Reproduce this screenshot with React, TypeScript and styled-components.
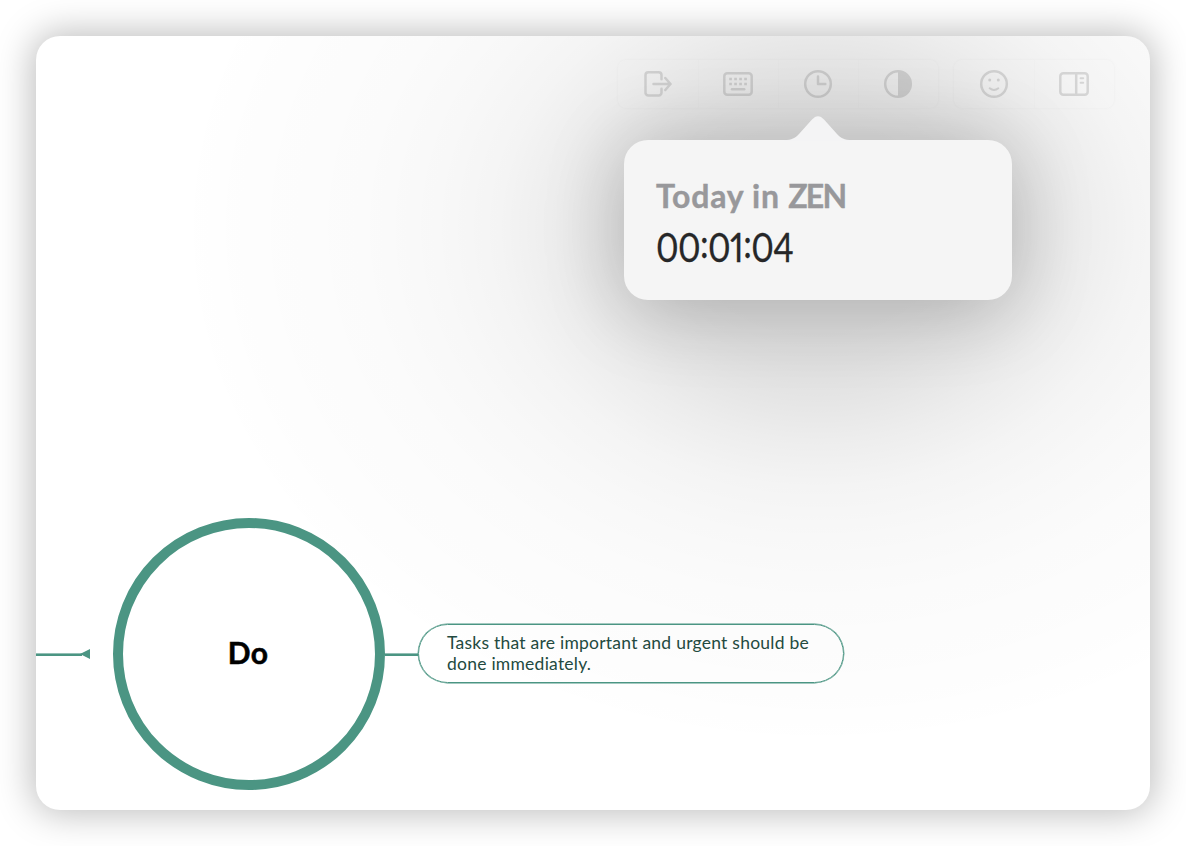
import React from 'react';
import styled, { createGlobalStyle } from 'styled-components';


const GlobalStyle = createGlobalStyle`
  * {
    box-sizing: border-box;
  }

  body {
    margin: 0;
    background: #fff;
    font-family: Lato, "Noto Sans", sans-serif;
  }
`;

const Page = styled.div`
  display: flex;
  height: 846px;
  padding: 36px;
  overflow: hidden;
`;

// the gradient is the wide, soft part of the popover shadow
const Window = styled.div`
  display: flex;
  flex-direction: column;
  justify-content: space-between;
  flex: 1 0;
  padding: 24px 36px 20px 0;
  border-radius: 24px;
  background:
    radial-gradient(
      640px 520px at 782px 192px,
      rgba(0, 0, 0, 0.14) 0%,
      rgba(0, 0, 0, 0.138) 20%,
      rgba(0, 0, 0, 0.126) 26%,
      rgba(0, 0, 0, 0.1) 33%,
      rgba(0, 0, 0, 0.07) 41%,
      rgba(0, 0, 0, 0.043) 50%,
      rgba(0, 0, 0, 0.026) 60%,
      rgba(0, 0, 0, 0.014) 72%,
      rgba(0, 0, 0, 0.007) 90%,
      rgba(0, 0, 0, 0) 100%
    ),
    #fff;
  box-shadow: 0 0 36px 4px rgba(0, 0, 0, 0.26);
  overflow: hidden;
`;

const Toolbar = styled.div`
  display: flex;
  flex-direction: row;
  justify-content: flex-end;
  gap: 16px;
`;

const Group = styled.div`
  display: flex;
  flex-direction: row;
  height: 48px;
  border-radius: 8px;
  box-shadow: 0 0 3px rgba(0, 0, 0, 0.04);
`;

const Button = styled.div`
  display: flex;
  align-items: center;
  justify-content: center;
  position: relative;
  width: 80px;

  & + & {
    box-shadow: inset 1px 0 rgba(0, 0, 0, 0.008);
  }
`;

const Icon = styled.svg`
  display: block;
  width: 32px;
  height: 32px;
  position: relative;
  z-index: 1;
  fill: none;
  stroke: #000;
  stroke-width: 2.5;
  stroke-linecap: round;
  stroke-linejoin: round;
  opacity: 0.12;
`;

const Popover = styled.div`
  position: absolute;
  top: 80px;
  left: -154px;
  width: 388px;
  height: 160px;
  padding: 37px 32px;
  border-radius: 24px;
  background: #f5f5f5;
  box-shadow: 0 8px 80px rgba(0, 0, 0, 0.22);
`;

const Arrow = styled.svg`
  position: absolute;
  top: -24px;
  left: 160px;
  width: 68px;
  height: 25px;
  fill: #f4f4f5;
`;

const Title = styled.div`
  color: #98989b;
  font-size: 32px;
  font-weight: 700;
  line-height: 38px;
  letter-spacing: 0.75px;
  white-space: nowrap;
  -webkit-text-stroke: 0.4px #98989b;
`;

const Mode = styled.span`
  letter-spacing: -1.8px;
`;

const Time = styled.div`
  margin-top: 8px;
  color: #262728;
  font-size: 40px;
  line-height: 48px;
  letter-spacing: -0.7px;
  font-variant-numeric: proportional-nums;
  white-space: nowrap;
  transform: scaleX(0.86);
  transform-origin: left;
  -webkit-text-stroke: 0.3px #262728;
`;

const Colon = styled.span`
  position: relative;
  top: -4px;
`;

const Map = styled.div`
  display: flex;
  flex-direction: row;
  align-items: center;
`;

const Line = styled.div<{ $width: number }>`
  flex: none;
  width: ${(p) => p.$width}px;
  height: 3px;
  border-top: 1px solid rgba(75, 149, 131, 0.6);
  background: #4b9583;
  background-clip: padding-box;
`;

const ArrowHead = styled.svg`
  flex: none;
  width: 10px;
  height: 10px;
  margin: 0 22.5px 0 -2px;
  fill: #4b9583;
`;

const Topic = styled.div`
  display: flex;
  flex: none;
  align-items: center;
  justify-content: center;
  width: 272px;
  height: 272px;
  padding: 0 1px 4px 0;
  border: 10px solid #4b9583;
  border-radius: 50%;
  background: #fff;
  color: #000;
  font-size: 30px;
  font-weight: 700;
  letter-spacing: 0.4px;
  -webkit-text-stroke: 0.5px #000;
`;

const Note = styled.div`
  flex: none;
  width: 426px;
  height: 59px;
  margin-bottom: 1px;
  padding: 7px 0 0 28.5px;
  border: 1px solid #4b9583;
  border-radius: 30px;
  box-shadow: 0 0 0 0.4px #4b9583;
  color: #234a40;
  font-size: 17.5px;
  line-height: 21px;
  letter-spacing: 0.24px;
  white-space: pre-line;
`;


function ExitIcon() {
  return (
    <Icon viewBox="0 0 32 32">
      <path d="M19.5 11.3V7a2.8 2.8 0 0 0-2.8-2.8H6.3A2.8 2.8 0 0 0 3.5 7v17.7a2.8 2.8 0 0 0 2.8 2.8h10.4a2.8 2.8 0 0 0 2.8-2.8v-4M11.5 16h17M23.3 10l5.2 6-5.2 6" />
    </Icon>
  );
}

function KeyboardIcon() {
  return (
    <Icon viewBox="0 0 32 32">
      <rect x="2.3" y="5.3" width="27.4" height="21.5" rx="3" />
      <path
        strokeLinecap="butt"
        strokeDasharray="2.7 2.3"
        strokeWidth="2.7"
        d="M7.2 11h17.7M7.2 16h17.7"
      />
      <path d="M10 21.3h12.2" />
    </Icon>
  );
}

function ClockIcon() {
  return (
    <Icon viewBox="0 0 32 32">
      <circle cx="16" cy="16" r="12.8" />
      <path d="M16 8.6V16h7.3" />
    </Icon>
  );
}

function ContrastIcon() {
  return (
    <Icon viewBox="0 0 32 32">
      <circle cx="16" cy="16" r="12.8" />
      <path stroke="none" fill="#000" d="M16 3a13 13 0 0 1 0 26z" />
    </Icon>
  );
}

function SmileIcon() {
  return (
    <Icon viewBox="0 0 32 32">
      <circle cx="16" cy="16" r="12.8" />
      <path strokeWidth="3" d="M11.7 12v.1M20.3 12v.1" />
      <path strokeWidth="2" d="M11.7 20.3q4.3 3.4 8.6 0" />
    </Icon>
  );
}

function PanelIcon() {
  return (
    <Icon viewBox="0 0 32 32">
      <rect x="2.3" y="5.3" width="27.4" height="21.5" rx="3" />
      <path strokeLinecap="butt" d="M18.2 5.3v21.5" />
      <path strokeWidth="2" d="M22.6 10.2h2.6M22.6 14.7h2.6" />
    </Icon>
  );
}

function ZenTimer() {
  return (
    <Popover>
      <Arrow viewBox="0 0 68 25">
        <path d="M0 25V24c8 0 11-2 15-6L28 3.5c4-4.5 8-4.5 12 0L53 18c4 4 7 6 15 6v1z" />
      </Arrow>
      <Title>Today in <Mode>ZEN</Mode></Title>
      <Time>00<Colon>:</Colon>01<Colon>:</Colon>04</Time>
    </Popover>
  );
}

function App() {
  return (
    <Page>
      <GlobalStyle />
      <Window>
        <Toolbar>
          <Group>
            <Button><ExitIcon /></Button>
            <Button><KeyboardIcon /></Button>
            <Button>
              <ZenTimer />
              <ClockIcon />
            </Button>
            <Button><ContrastIcon /></Button>
          </Group>
          <Group>
            <Button><SmileIcon /></Button>
            <Button><PanelIcon /></Button>
          </Group>
        </Toolbar>
        <Map>
          <Line $width={46} />
          <ArrowHead viewBox="0 0 10 10">
            <path d="M0 5L10 0v10z" />
          </ArrowHead>
          <Topic>Do</Topic>
          <Line $width={33} />
          <Note>{'Tasks that are important and urgent should be\ndone immediately.'}</Note>
        </Map>
      </Window>
    </Page>
  );
}

export default App;
